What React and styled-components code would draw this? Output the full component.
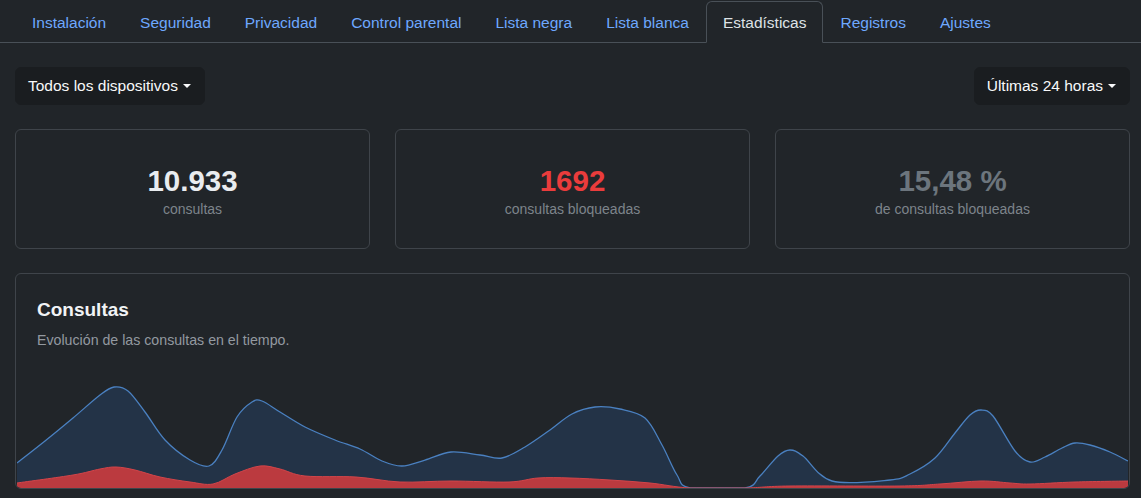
import React from "react";
import styled, { createGlobalStyle } from "styled-components";

const GlobalStyle = createGlobalStyle`
  html, body {
    margin: 0;
    padding: 0;
    background: #212529;
    font-family: "Liberation Sans", Arial, sans-serif;
    color: #dee2e6;
  }
  * { box-sizing: border-box; }
`;

const Page = styled.div`
  padding: 1px 11px 8px 15px;
`;

const Tabs = styled.ul`
  display: flex;
  list-style: none;
  margin: 0 -11px 0 -15px;
  padding: 0 0 0 15px;
  border-bottom: 1px solid #495057;
`;

const Tab = styled.li`
  margin-bottom: -1px;
  padding: 9px 16px 7px;
  font-size: 15.5px;
  line-height: 24px;
  border: 1px solid transparent;
  border-top-left-radius: 6px;
  border-top-right-radius: 6px;
  color: ${(p) => (p.$active ? "#dee2e6" : "#6ea8fe")};
  background: ${(p) => (p.$active ? "#212529" : "transparent")};
  border-color: ${(p) =>
    p.$active ? "#495057 #495057 #212529" : "transparent"};
  cursor: pointer;
`;

const Toolbar = styled.div`
  display: flex;
  justify-content: space-between;
  margin-top: 24px;
`;

const Dropdown = styled.button`
  display: inline-flex;
  align-items: center;
  height: 38px;
  padding: 6px 13px 6px 12px;
  font-family: inherit;
  font-size: 15.5px;
  line-height: 24px;
  color: #f8f9fa;
  background: #1a1d20;
  border: 1px solid #1a1d20;
  border-radius: 6px;

  &::after {
    content: "";
    margin-left: 5px;
    border-top: 4.5px solid #f8f9fa;
    border-left: 4px solid transparent;
    border-right: 4px solid transparent;
  }
`;

const StatGrid = styled.div`
  display: grid;
  grid-template-columns: repeat(3, 1fr);
  gap: 25px;
  margin-top: 24px;
`;

const Card = styled.div`
  border: 1px solid #3f444a;
  border-radius: 6px;
  background: #212529;
`;

const StatCard = styled(Card)`
  height: 120px;
  display: flex;
  flex-direction: column;
  align-items: center;
  justify-content: center;
  padding-top: 4px;
`;

const StatValue = styled.div`
  font-size: 29.5px;
  font-weight: 700;
  line-height: 36px;
  color: ${(p) => p.$color};
`;

const StatLabel = styled.div`
  font-size: 14px;
  line-height: 20px;
  color: #7d848b;
`;

const ChartCard = styled(Card)`
  margin-top: 24px;
  overflow: hidden;
`;

const ChartHead = styled.div`
  padding: 24px 21px 0;
`;

const ChartTitle = styled.h5`
  margin: 0;
  font-size: 19px;
  line-height: 24px;
  font-weight: 700;
  color: #f1f3f5;
`;

const ChartSub = styled.p`
  margin: 8px 0 0;
  font-size: 14.2px;
  line-height: 20px;
  color: #9399a0;
`;

const ChartArea = styled.div`
  margin-top: 28px;
  padding: 0 1px;
  line-height: 0;

  svg {
    display: block;
    width: 100%;
    height: 110px;
  }
`;

const blue = [
  [17, 463], [45, 441], [73, 418], [100, 395], [114, 387], [128, 391],
  [145, 412], [165, 440], [190, 460], [209, 466], [222, 450], [237, 417],
  [252, 402], [262, 401], [280, 412], [305, 427], [335, 440], [360, 449],
  [382, 461], [402, 466], [425, 460], [451, 452], [480, 455], [502, 458],
  [525, 447], [550, 430], [572, 414], [595, 407], [620, 409], [645, 418],
  [662, 445], [677, 475], [690, 488], [745, 488], [760, 476], [778, 456],
  [790, 450], [803, 456], [832, 481], [890, 480], [910, 474], [935, 458],
  [955, 433], [970, 415], [981, 410], [993, 416], [1015, 451], [1030, 462],
  [1045, 457], [1062, 448], [1075, 443], [1090, 445], [1110, 452], [1128, 461],
];

const red = [
  [17, 483], [73, 475], [100, 469], [116, 467], [135, 470], [160, 477],
  [190, 482], [213, 484], [235, 474], [260, 466], [280, 469], [305, 476],
  [356, 477], [400, 482], [451, 481], [509, 482], [538, 478], [570, 478],
  [610, 480], [650, 483], [690, 488], [745, 488], [790, 486], [900, 486],
  [940, 484], [981, 481], [1010, 483], [1030, 484], [1075, 482], [1128, 481],
];

const OX = 17;
const OY = 378;
const BASE = 110;

// catmull-rom → cubic bezier, clamped so curves don't dip under the base line
const smooth = (pts) => {
  const p = pts.map(([x, y]) => [x - OX, y - OY]);
  let d = `M${p[0][0]},${p[0][1]}`;
  for (let i = 0; i < p.length - 1; i++) {
    const p0 = p[i - 1] || p[i];
    const p1 = p[i];
    const p2 = p[i + 1];
    const p3 = p[i + 2] || p2;
    const t = 6;
    const c1x = p1[0] + (p2[0] - p0[0]) / t;
    const c1y = Math.min(BASE, p1[1] + (p2[1] - p0[1]) / t);
    const c2x = p2[0] - (p3[0] - p1[0]) / t;
    const c2y = Math.min(BASE, p2[1] - (p3[1] - p1[1]) / t);
    d += ` C${c1x},${c1y} ${c2x},${c2y} ${p2[0]},${p2[1]}`;
  }
  return d;
};

const W = 1128 - OX;

const Chart = () => {
  const b = smooth(blue);
  const r = smooth(red);
  return (
    <svg viewBox={`0 0 ${W} ${BASE}`} preserveAspectRatio="none">
      <path d={`${b} L${W},${BASE} L0,${BASE} Z`} fill="#233347" />
      <path d={b} fill="none" stroke="#4a80c0" strokeWidth="1.3" />
      <path d={`${r} L${W},${BASE} L0,${BASE} Z`} fill="#bb3a3f" />
      <path d={r} fill="none" stroke="#d2454a" strokeWidth="1" />
    </svg>
  );
};

const tabs = [
  "Instalación",
  "Seguridad",
  "Privacidad",
  "Control parental",
  "Lista negra",
  "Lista blanca",
  "Estadísticas",
  "Registros",
  "Ajustes",
];

const stats = [
  { value: "10.933", label: "consultas", color: "#e9ecef" },
  { value: "1692", label: "consultas bloqueadas", color: "#ea3c3c" },
  { value: "15,48 %", label: "de consultas bloqueadas", color: "#6c757d" },
];

export default function App() {
  return (
    <>
      <GlobalStyle />
      <Page>
        <Tabs>
          {tabs.map((t) => (
            <Tab key={t} $active={t === "Estadísticas"}>
              {t}
            </Tab>
          ))}
        </Tabs>

        <Toolbar>
          <Dropdown>Todos los dispositivos</Dropdown>
          <Dropdown>Últimas 24 horas</Dropdown>
        </Toolbar>

        <StatGrid>
          {stats.map((s) => (
            <StatCard key={s.label}>
              <StatValue $color={s.color}>{s.value}</StatValue>
              <StatLabel>{s.label}</StatLabel>
            </StatCard>
          ))}
        </StatGrid>

        <ChartCard>
          <ChartHead>
            <ChartTitle>Consultas</ChartTitle>
            <ChartSub>Evolución de las consultas en el tiempo.</ChartSub>
          </ChartHead>
          <ChartArea>
            <Chart />
          </ChartArea>
        </ChartCard>
      </Page>
    </>
  );
}
